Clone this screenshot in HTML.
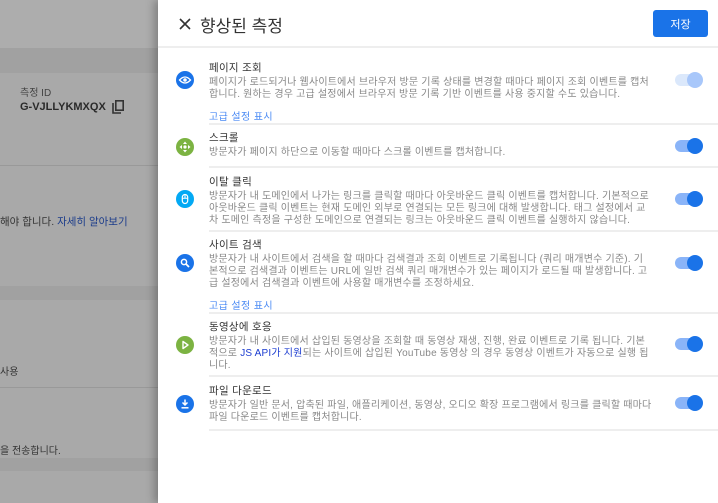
<!DOCTYPE html><html><head><meta charset="utf-8"><style>
*{margin:0;padding:0;box-sizing:border-box}
body{width:718px;height:503px;overflow:hidden;position:relative;background:#a9a9a9;font-family:"Liberation Sans","Noto Sans CJK KR",sans-serif}
.bg{position:absolute;left:0;width:160px}
.panel{position:absolute;left:158px;top:0;width:560px;height:503px;background:#fff;box-shadow:-4px 0 8px rgba(0,0,0,.25)}
.hdr{height:48px;border-bottom:2px solid #eee;position:relative}
.ttl{position:absolute;left:42px;top:12px;font-size:17px;color:#333}
.save{position:absolute;left:495px;top:10px;width:55px;height:27px;background:#1a73e8;border-radius:3px;color:#fff;font-size:11px;display:flex;align-items:center;justify-content:center}
.row{position:absolute;left:51px;width:509px;border-bottom:2px solid #eee;padding-top:2px}
.row h4{font-weight:normal;font-size:10.5px;color:#333;line-height:13px;margin-bottom:2px;letter-spacing:.3px}
.row p{font-size:10px;color:#888;line-height:12px;white-space:nowrap;letter-spacing:.2px}
.row a{display:block;font-size:10px;color:#4a8af4;margin-top:7px;letter-spacing:.4px}
.ic{position:absolute;left:-33px;width:18px;height:18px}
.tg{position:absolute;left:466px;width:27px;height:12px;border-radius:6px;background:#8ab4f8}
.tg::after{content:"";position:absolute;right:-1px;top:-2px;width:16px;height:16px;border-radius:50%;background:#1a73e8}
.tg.off{background:#dbe8fb}.tg.off::after{background:#a8c7fa}
</style></head><body>
<div class="bg" style="top:0;height:48px;background:#adadad"></div>
<div class="bg" style="top:48px;height:25px;background:#a1a1a1"></div>
<div class="bg" style="top:165px;height:1px;background:#999"></div>
<div class="bg" style="top:286px;height:14px;background:#a1a1a1"></div>
<div class="bg" style="top:387px;height:1px;background:#999"></div>
<div class="bg" style="top:458px;height:13px;background:#a1a1a1"></div>
<div style="position:absolute;left:20px;top:84px;font-size:10px;color:#444">측정 ID</div>
<div style="position:absolute;left:20px;top:101px;font-size:11px;font-weight:bold;color:#2a2a2a">G-VJLLYKMXQX</div>
<svg style="position:absolute;left:110px;top:99px" width="16" height="16" viewBox="0 0 16 16"><path d="M3 4v10h8" fill="none" stroke="#333" stroke-width="1.6"/><rect x="5.8" y="1.8" width="7.4" height="9.4" fill="none" stroke="#333" stroke-width="1.6"/></svg>
<div style="position:absolute;left:0;top:214px;font-size:10.5px;color:#333">해야 합니다. <span style="color:#1a3b8a">자세히 알아보기</span></div>
<div style="position:absolute;left:0;top:363px;font-size:10px;color:#333">사용</div>
<div style="position:absolute;left:0;top:442px;font-size:10px;color:#333">을 전송합니다.</div>
<div class="panel">
<div class="hdr"><svg style="position:absolute;left:21px;top:18px" width="12" height="12" viewBox="0 0 12 12"><path d="M1 1L11 11M11 1L1 11" stroke="#333" stroke-width="1.6"/></svg><span class="ttl">향상된 측정</span><div class="save">저장</div></div>
<div class="row" style="top:60px;height:65px"><svg class="ic" style="top:11px" viewBox="0 0 18 18"><circle cx="9" cy="9" r="9" fill="#1a73e8"/><path d="M3.5 9Q9 3 14.5 9Q9 15 3.5 9Z" fill="none" stroke="#fff" stroke-width="1.3"/><circle cx="9" cy="9" r="1.8" fill="#fff"/></svg><h4>페이지 조회</h4><p>페이지가 로드되거나 웹사이트에서 브라우저 방문 기록 상태를 변경할 때마다 페이지 조회 이벤트를 캡처<br>합니다. 원하는 경우 고급 설정에서 브라우저 방문 기록 기반 이벤트를 사용 중지할 수도 있습니다.</p><a>고급 설정 표시</a><div class="tg off" style="top:14px"></div></div>
<div class="row" style="top:130px;height:38px"><svg class="ic" style="top:8px" viewBox="0 0 18 18"><circle cx="9" cy="9" r="9" fill="#7cb342"/><path d="M9 3.5L11 6H7ZM9 14.5L11 12H7ZM3.5 9L6 7V11ZM14.5 9L12 7V11Z" fill="#fff"/><circle cx="9" cy="9" r="1.6" fill="#fff"/></svg><h4>스크롤</h4><p>방문자가 페이지 하단으로 이동할 때마다 스크롤 이벤트를 캡처합니다.</p><div class="tg" style="top:10px"></div></div>
<div class="row" style="top:174px;height:58px"><svg class="ic" style="top:16px" viewBox="0 0 18 18"><circle cx="9" cy="9" r="9" fill="#03a9f4"/><rect x="6.3" y="4.5" width="5.4" height="9" rx="2.7" fill="none" stroke="#fff" stroke-width="1.2"/><path d="M9 5v3M6.5 8.3h5" stroke="#fff" stroke-width="1"/></svg><h4>이탈 클릭</h4><p>방문자가 내 도메인에서 나가는 링크를 클릭할 때마다 아웃바운드 클릭 이벤트를 캡처합니다. 기본적으로<br>아웃바운드 클릭 이벤트는 현재 도메인 외부로 연결되는 모든 링크에 대해 발생합니다. 태그 설정에서 교<br>차 도메인 측정을 구성한 도메인으로 연결되는 링크는 아웃바운드 클릭 이벤트를 실행하지 않습니다.</p><div class="tg" style="top:19px"></div></div>
<div class="row" style="top:237px;height:77px"><svg class="ic" style="top:17px" viewBox="0 0 18 18"><circle cx="9" cy="9" r="9" fill="#1a73e8"/><circle cx="8" cy="8" r="2.6" fill="none" stroke="#fff" stroke-width="1.5"/><path d="M10 10L13 13" stroke="#fff" stroke-width="1.8"/></svg><h4>사이트 검색</h4><p>방문자가 내 사이트에서 검색을 할 때마다 검색결과 조회 이벤트로 기록됩니다 (쿼리 매개변수 기준). 기<br>본적으로 검색결과 이벤트는 URL에 일반 검색 쿼리 매개변수가 있는 페이지가 로드될 때 발생합니다. 고<br>급 설정에서 검색결과 이벤트에 사용할 매개변수를 조정하세요.</p><a>고급 설정 표시</a><div class="tg" style="top:20px"></div></div>
<div class="row" style="top:319px;height:58px"><svg class="ic" style="top:17px" viewBox="0 0 18 18"><circle cx="9" cy="9" r="9" fill="#7cb342"/><path d="M7 5.5L12 9L7 12.5Z" fill="none" stroke="#fff" stroke-width="1.4" stroke-linejoin="round"/></svg><h4>동영상에 호응</h4><p>방문자가 내 사이트에서 삽입된 동영상을 조회할 때 동영상 재생, 진행, 완료 이벤트로 기록 됩니다. 기본<br>적으로 <span style="color:#1a3bd0">JS API가 지원</span>되는 사이트에 삽입된 YouTube 동영상 의 경우 동영상 이벤트가 자동으로 실행 됩<br>니다.</p><div class="tg" style="top:19px"></div></div>
<div class="row" style="top:383px;height:48px"><svg class="ic" style="top:12px" viewBox="0 0 18 18"><circle cx="9" cy="9" r="9" fill="#1a73e8"/><path d="M9 4.5v5.5M6.5 7.5L9 10L11.5 7.5" fill="none" stroke="#fff" stroke-width="1.5"/><path d="M5.5 12.8h7" stroke="#fff" stroke-width="1.5"/></svg><h4>파일 다운로드</h4><p>방문자가 일반 문서, 압축된 파일, 애플리케이션, 동영상, 오디오 확장 프로그램에서 링크를 클릭할 때마다<br>파일 다운로드 이벤트를 캡처합니다.</p><div class="tg" style="top:14px"></div></div>
</div>
</body></html>
